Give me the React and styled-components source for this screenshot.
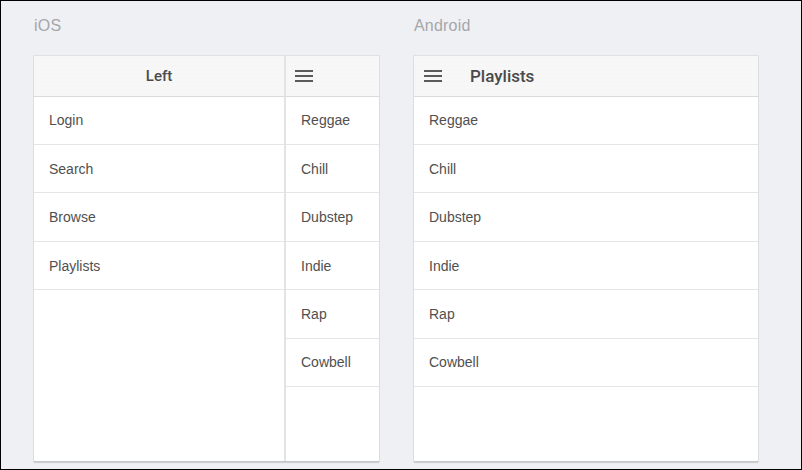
import React from "react";
import styled, { createGlobalStyle } from "styled-components";

const Global = createGlobalStyle`
  html, body { margin: 0; padding: 0; }
  body { font-family: "Liberation Sans", Arial, sans-serif; }
`;

const Frame = styled.div`
  box-sizing: border-box;
  width: 802px;
  height: 470px;
  border: 1px solid #000;
  background: #eff0f4;
  display: flex;
  gap: 35px;
  padding: 0 0 0 33px;
`;

const Section = styled.div`
  display: flex;
  flex-direction: column;
  width: ${(p) => p.$w}px;
`;

const Label = styled.div`
  height: 55px;
  flex: none;
  box-sizing: border-box;
  padding-top: 16px;
  font-size: 16px;
  font-weight: 300;
  color: #a6a6a9;
  letter-spacing: 0.2px;
`;

const Card = styled.div`
  height: 405px;
  background: #fff;
  box-shadow: 0 0 0 1px rgba(0, 0, 0, 0.06), 0 2px 1px rgba(0, 0, 0, 0.13);
  display: flex;
  overflow: hidden;
`;

const Pane = styled.div`
  display: flex;
  flex-direction: column;
  flex: ${(p) => (p.$grow ? "1" : "none")};
  width: ${(p) => (p.$w ? `${p.$w}px` : "auto")};
  border-left: ${(p) => (p.$divided ? "2px solid #e3e3e3" : "none")};
`;

const Header = styled.div`
  box-sizing: border-box;
  height: 40.5px;
  flex: none;
  display: flex;
  align-items: center;
  justify-content: ${(p) => (p.$center ? "center" : "flex-start")};
  padding: 0 ${(p) => p.$px || 0}px;
  gap: ${(p) => p.$gap || 0}px;
  background-color: #f7f7f7;
  background-image: radial-gradient(rgba(0, 0, 0, 0.02) 0.6px, transparent 0.8px);
  background-size: 4px 4px;
  border-bottom: 1px solid #dadada;
  color: #444;
`;

const Title = styled.span`
  font-family: Roboto, "Liberation Sans", Arial, sans-serif;
  font-size: ${(p) => p.$size}px;
  font-weight: 500;
  color: #4a4a4a;
`;

const Row = styled.div`
  box-sizing: border-box;
  height: 48.45px;
  flex: none;
  display: flex;
  align-items: center;
  padding-left: 15px;
  border-bottom: 1px solid #e5e5e5;
  font-size: 14px;
  color: #505050;
`;

const Burger = () => (
  <svg width="18" height="14" viewBox="0 0 18 14">
    <rect x="0" y="1" width="18" height="2" fill="#5a5a5a" />
    <rect x="0" y="6" width="18" height="2" fill="#5a5a5a" />
    <rect x="0" y="11" width="18" height="2" fill="#5a5a5a" />
  </svg>
);

const menu = ["Login", "Search", "Browse", "Playlists"];
const playlists = ["Reggae", "Chill", "Dubstep", "Indie", "Rap", "Cowbell"];

export default function App() {
  return (
    <>
      <Global />
      <Frame>
        <Section $w={345}>
          <Label>iOS</Label>
          <Card>
            <Pane $grow>
              <Header $center>
                <Title $size={15}>Left</Title>
              </Header>
              {menu.map((m) => (
                <Row key={m}>{m}</Row>
              ))}
            </Pane>
            <Pane $w={93} $divided>
              <Header $px={9}>
                <Burger />
              </Header>
              {playlists.map((m) => (
                <Row key={m}>{m}</Row>
              ))}
            </Pane>
          </Card>
        </Section>
        <Section $w={344}>
          <Label>Android</Label>
          <Card>
            <Pane $grow>
              <Header $px={10} $gap={28}>
                <Burger />
                <Title $size={17}>Playlists</Title>
              </Header>
              {playlists.map((m) => (
                <Row key={m}>{m}</Row>
              ))}
            </Pane>
          </Card>
        </Section>
      </Frame>
    </>
  );
}
